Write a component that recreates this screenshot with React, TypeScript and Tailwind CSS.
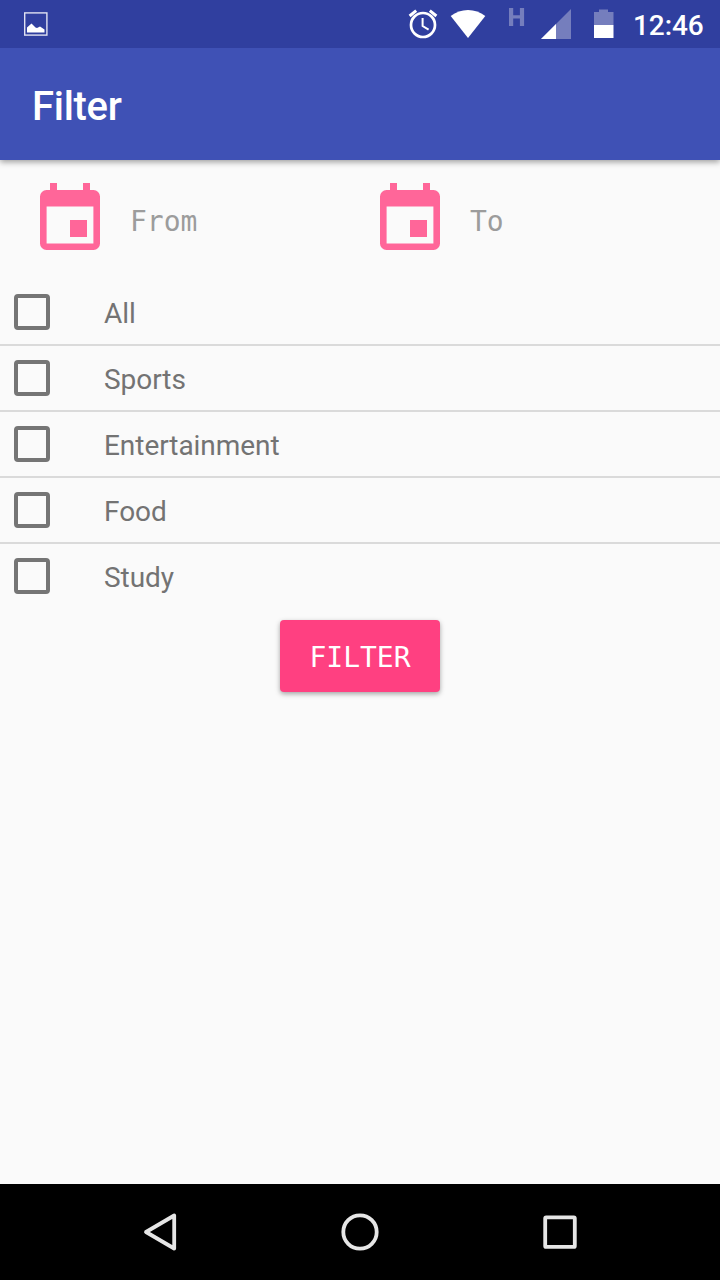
import React from "react";

const categories = ["All", "Sports", "Entertainment", "Food", "Study"];

function CalendarIcon() {
  return (
    <svg width="60" height="67" viewBox="0 0 60 67" fill="#ff6699" className="shrink-0">
      <path
        fillRule="evenodd"
        d="M10 0h7v7h26V0h7v7h3.500a6.500 6.500 0 0 1 6.500 6.500v47a6.500 6.500 0 0 1-6.500 6.500h-47A6.500 6.500 0 0 1 0 60.500v-47A6.500 6.500 0 0 1 6.500 7H10zM6.600 23.600v36.800h46.800V23.600z"
      />
      <path d="M30 37h17v17H30z" />
    </svg>
  );
}

function StatusBar() {
  return (
    <header className="relative z-20 flex h-12 shrink-0 bg-[#303f9f] text-white">
      <svg width="620" height="48" viewBox="0 0 620 48" fill="#fff">
        <rect x="24.700" y="12.900" width="22.200" height="22.200" fill="none" stroke="#e0e2f2" strokeWidth="1.400" />
        <path d="M27 32.500v-5l4.500-4 4 4 1.500.5 3-1.500 4.500 3v3z" />
        <g fill="none" stroke="#fff">
          <circle cx="423" cy="25" r="12" strokeWidth="2.700" />
          <path d="M422.600 18v8l6 3.700" strokeWidth="2" />
          <path d="M409.600 16l6.600-5.300M436.400 16l-6.600-5.300" strokeWidth="3" />
        </g>
        <path d="M468 38L450.700 16C460.500 8 475.500 8 485.300 16z" />
        <path d="M509 8h4.200v7.200h6.700V8h4.200v18h-4.200v-7.400h-6.700V26H509z" fill="#757ebd" />
        <path d="M541 39l30-30v30z" fill="#757ebd" />
        <path d="M541 39l15-15v15z" />
        <path d="M594 12h5V9.500h9V12h5.500v13H594z" fill="#757ebd" />
        <path d="M594 25h19.500v13H594z" />
      </svg>
      <span className="ml-[13px] pt-[10px] text-[28px] leading-8 font-medium tracking-[-0.1px]">12:46</span>
    </header>
  );
}

function DateField({ label }: { label: string }) {
  return (
    <button className="flex w-[340px] items-start text-left">
      <CalendarIcon />
      <span className="ml-[30px] pt-[23px] font-['DejaVu_Sans_Mono',monospace] text-[28px] leading-8 text-[#9c9c9c]">
        {label}
      </span>
    </button>
  );
}

function CategoryRow({ label }: { label: string }) {
  return (
    <label className="flex h-[66px] items-center border-b-2 border-[#dadada] pl-[14px] last:border-transparent">
      <span className="size-9 shrink-0 rounded-[4px] border-4 border-[#757575]" />
      <span className="ml-[54px] pt-1 text-[28px] leading-8 tracking-[-0.05px] text-[#737373]">{label}</span>
    </label>
  );
}

export default function App() {
  return (
    <div className="flex h-[1280px] w-[720px] flex-col overflow-hidden bg-[#fafafa] font-[Roboto,sans-serif]">
      <StatusBar />
      <div className="z-10 flex h-28 shrink-0 items-center bg-[#3f51b5] pt-[6px] pl-8 shadow-[0_2px_6px_rgba(0,0,0,0.38)]">
        <h1 className="text-[40px] leading-[48px] font-medium tracking-[-0.3px] text-white">Filter</h1>
      </div>
      <main className="flex flex-1 flex-col">
        <div className="flex h-[120px] pt-[23px] pl-10">
          <DateField label="From" />
          <DateField label="To" />
        </div>
        <div className="flex flex-col">
          {categories.map((category) => (
            <CategoryRow key={category} label={category} />
          ))}
        </div>
        <button className="mt-[10px] flex h-[72px] w-40 items-center justify-center self-center rounded-[4px] bg-[#ff4081] pt-1 font-['DejaVu_Sans_Mono',monospace] text-[28px] leading-8 text-white shadow-[0_2px_5px_rgba(0,0,0,0.35)]">
          FILTER
        </button>
      </main>
      <nav className="flex h-24 shrink-0 items-center justify-center bg-black">
        <svg width="720" height="96" viewBox="0 0 720 96" fill="none" stroke="#e6e6e6" strokeWidth="3.800" strokeLinejoin="round">
          <path d="M174.200 31.500v33L146 48z" />
          <circle cx="360" cy="48" r="16.700" />
          <rect x="545.200" y="33.300" width="29.600" height="29.600" rx="1" />
        </svg>
      </nav>
    </div>
  );
}
